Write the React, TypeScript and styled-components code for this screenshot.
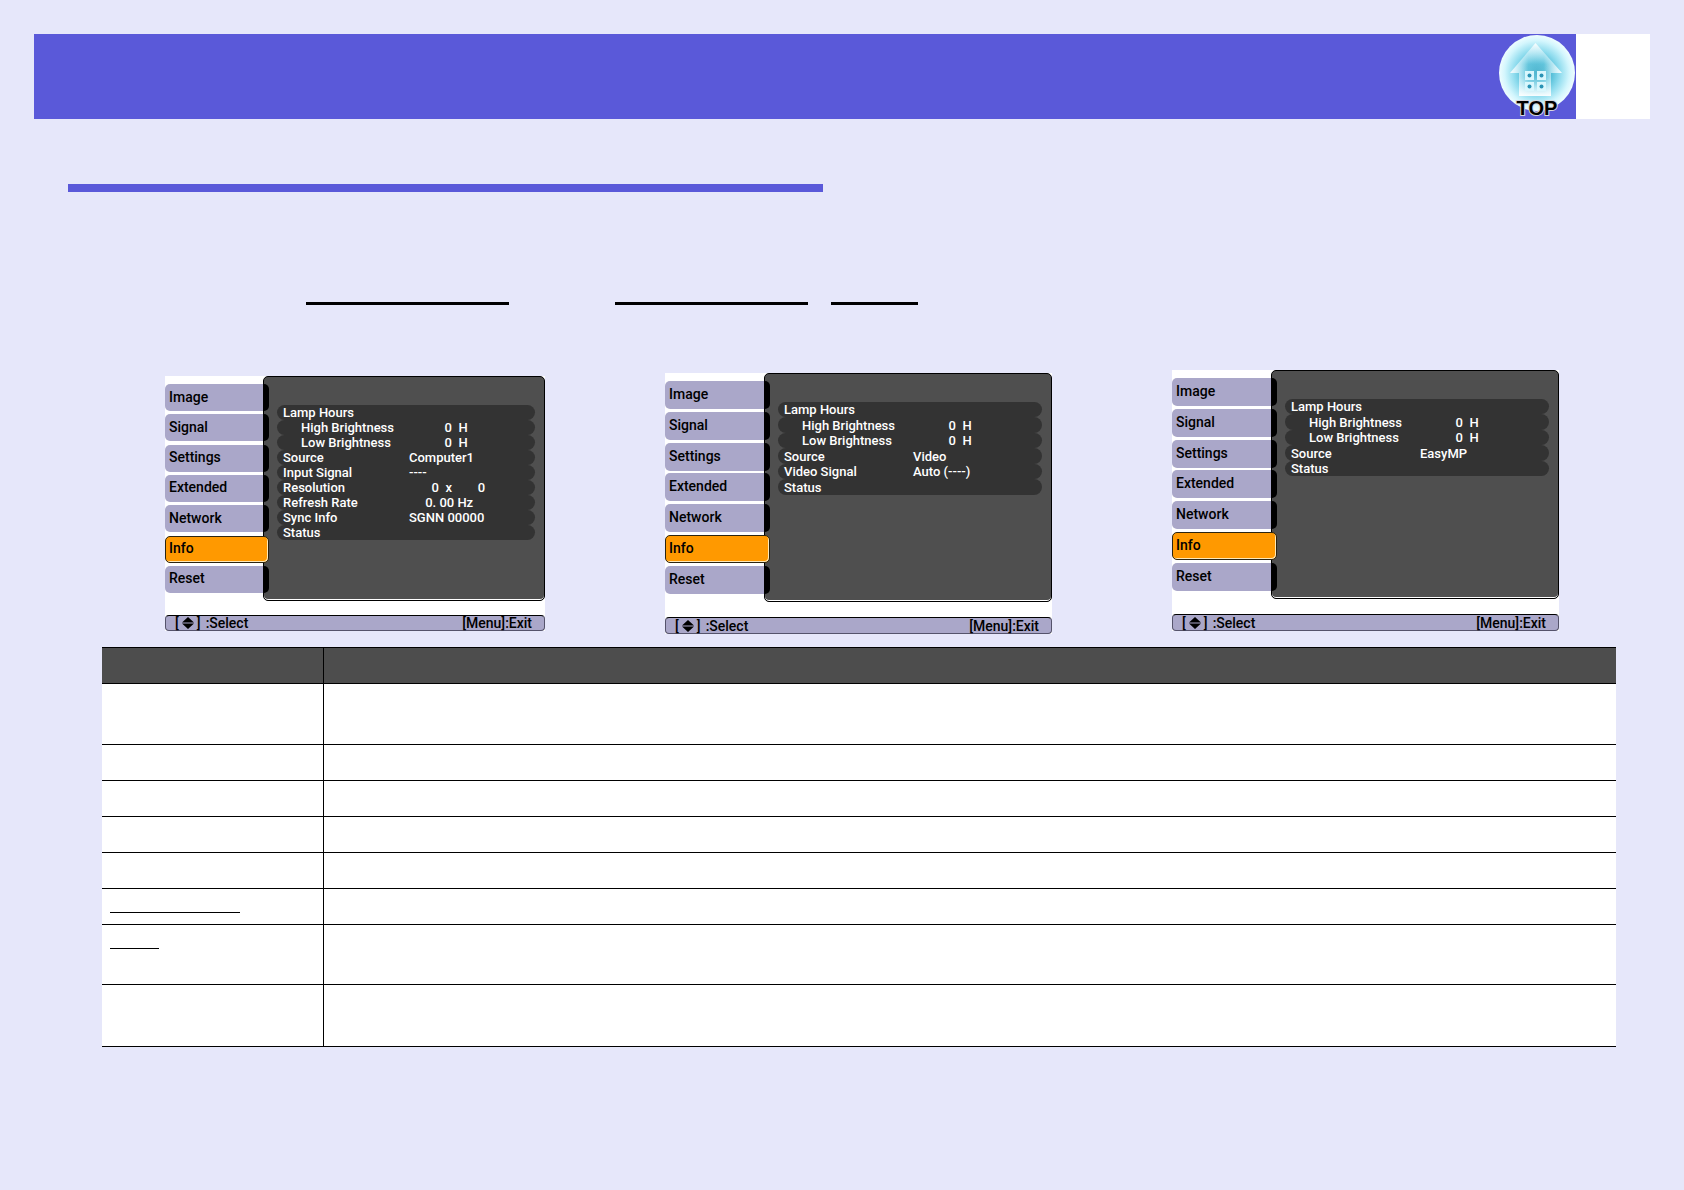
import React from "react";
import styled, { createGlobalStyle, css } from "styled-components";

type ScreenSize = "small" | "large";

interface InfoItem {
  label: string;
  value?: string;
  indent?: boolean;
}

interface ProjectorMenuProps {
  size: ScreenSize;
  drop: number;
  items: InfoItem[];
}

const TABS = [
  "Image",
  "Signal",
  "Settings",
  "Extended",
  "Network",
  "Info",
  "Reset",
];

const LAMP_ITEMS: InfoItem[] = [
  { label: "Lamp Hours" },
  { label: "High Brightness", value: "           0  H", indent: true },
  { label: "Low Brightness", value: "           0  H", indent: true },
];

const COMPUTER_ITEMS: InfoItem[] = [
  ...LAMP_ITEMS,
  { label: "Source", value: "Computer1" },
  { label: "Input Signal", value: "----" },
  { label: "Resolution", value: "       0  x        0" },
  { label: "Refresh Rate", value: "     0. 00 Hz" },
  { label: "Sync Info", value: "SGNN 00000" },
  { label: "Status" },
];

const VIDEO_ITEMS: InfoItem[] = [
  ...LAMP_ITEMS,
  { label: "Source", value: "Video" },
  { label: "Video Signal", value: "Auto (----)" },
  { label: "Status" },
];

const EASYMP_ITEMS: InfoItem[] = [
  ...LAMP_ITEMS,
  { label: "Source", value: "EasyMP" },
  { label: "Status" },
];

// height of each row, and the width of the underline in its first cell
const TABLE_ROWS = [
  { height: 61 },
  { height: 36 },
  { height: 36 },
  { height: 36 },
  { height: 36 },
  { height: 36, underline: 130 },
  { height: 60, underline: 49 },
  { height: 62 },
];

const TopIcon = () => (
  <svg width="78" height="85" viewBox="0 0 78 85">
    <defs>
      <radialGradient id="ball" cx="0.5" cy="0.5" r="0.5">
        <stop offset="0" stopColor="#1797b8" />
        <stop offset="0.3" stopColor="#3fb4d0" />
        <stop offset="0.6" stopColor="#8fdcee" />
        <stop offset="0.85" stopColor="#d3f6fd" />
        <stop offset="1" stopColor="#effdff" />
      </radialGradient>
      <linearGradient id="house" x1="0" y1="0" x2="0" y2="1">
        <stop offset="0" stopColor="#ffffff" stopOpacity="0.95" />
        <stop offset="0.4" stopColor="#a5e4f3" stopOpacity="0.35" />
        <stop offset="0.65" stopColor="#b5ecf8" stopOpacity="0.4" />
        <stop offset="1" stopColor="#ffffff" stopOpacity="0.95" />
      </linearGradient>
      <linearGradient id="eaves" x1="0" y1="0" x2="1" y2="0">
        <stop offset="0" stopColor="#ffffff" stopOpacity="0.9" />
        <stop offset="0.35" stopColor="#ffffff" stopOpacity="0" />
        <stop offset="0.65" stopColor="#ffffff" stopOpacity="0" />
        <stop offset="1" stopColor="#ffffff" stopOpacity="0.9" />
      </linearGradient>
    </defs>
    <circle cx="39" cy="39" r="38" fill="url(#ball)" />
    <path d="M37.5 9 L64 39 H53 V62 H21 V39 H12 Z" fill="url(#house)" />
    <path d="M37.5 9 L64 39 H53 V62 H21 V39 H12 Z" fill="url(#eaves)" />
    {[27, 39].map((x) =>
      [37, 48].map((y) => (
        <g key={`${x}-${y}`}>
          <rect x={x} y={y} width="9" height="9" fill="#d9f7fd" />
          <circle cx={x + 4.5} cy={y + 4.5} r="2" fill="#2a93b5" />
        </g>
      )),
    )}
    <text
      x="39"
      y="81"
      textAnchor="middle"
      fontFamily="Liberation Sans, Arial, sans-serif"
      fontSize="20"
      fontWeight="700"
      fill="#000000"
      stroke="#d5d5dd"
      strokeWidth="2"
      paintOrder="stroke"
    >
      TOP
    </text>
  </svg>
);

const ProjectorMenu = ({ size, drop, items }: ProjectorMenuProps) => {
  return (
    <MenuScreen $size={size} $drop={drop}>
      <MenuBody $size={size}>
        <TabList $size={size}>
          {TABS.map((tab) => (
            <TabButton
              key={tab}
              type="button"
              $size={size}
              $active={tab === "Info"}
            >
              {tab}
            </TabButton>
          ))}
        </TabList>
        <InfoPanel>
          <InfoList>
            {items.map((item) => (
              <InfoRow key={item.label} $size={size}>
                <InfoLabel $indent={!!item.indent}>{item.label}</InfoLabel>
                <InfoValue>{item.value}</InfoValue>
              </InfoRow>
            ))}
          </InfoList>
        </InfoPanel>
      </MenuBody>
      <GuideBar $size={size}>
        <GuideText>
          [
          <svg width="12" height="12" viewBox="0 0 12 12">
            <path d="M6 0 L12 5.5 H0 Z M0 6.5 H12 L6 12 Z" fill="#000000" />
          </svg>
          ]<GuideAction>:Select</GuideAction>
        </GuideText>
        <GuideText>[Menu]:Exit</GuideText>
      </GuideBar>
    </MenuScreen>
  );
};

const App = () => {
  return (
    <>
      <GlobalStyle />
      <Header>
        <TitleBar>
          <TopLink href="#">
            <TopIcon />
          </TopLink>
        </TitleBar>
        <PageNumber />
      </Header>
      <Main>
        <SectionRule />
        <TermLine>
          <TermRule $width={203} $gap={0} />
          <TermRule $width={193} $gap={106} />
          <TermRule $width={87} $gap={23} />
        </TermLine>
        <Content>
          <ScreenRow>
            <ProjectorMenu size="small" drop={6} items={COMPUTER_ITEMS} />
            <ProjectorMenu size="large" drop={3} items={VIDEO_ITEMS} />
            <ProjectorMenu size="large" drop={0} items={EASYMP_ITEMS} />
          </ScreenRow>
          <InfoTable>
            <thead>
              <tr>
                <HeadCell $narrow />
                <HeadCell />
              </tr>
            </thead>
            <tbody>
              {TABLE_ROWS.map((row, index) => (
                <TableRow key={index} $height={row.height}>
                  <BodyCell>
                    {row.underline && <CellRule $width={row.underline} />}
                  </BodyCell>
                  <BodyCell />
                </TableRow>
              ))}
            </tbody>
          </InfoTable>
        </Content>
      </Main>
    </>
  );
};

export default App;

const GlobalStyle = createGlobalStyle`
  * {
    box-sizing: border-box;
  }

  body {
    margin: 0;
    background-color: #e6e7fa;
    font-family: Roboto, "Liberation Sans", Arial, sans-serif;
  }
`;

const Header = styled.header`
  margin: 34px 34px 0;

  display: flex;
  height: 85px;
`;

const TitleBar = styled.div`
  flex: 1;
  display: flex;
  justify-content: flex-end;

  background-color: #5a59d9;
`;

const TopLink = styled.a`
  display: block;
  height: 85px;
`;

const PageNumber = styled.div`
  width: 74px;
  background-color: #ffffff;
`;

const Main = styled.main`
  padding: 65px 68px 0;
`;

const SectionRule = styled.div`
  width: 49%;
  max-width: 755px;
  height: 8px;
  background-color: #5a59d9;
`;

const TermLine = styled.div`
  margin-top: 110px;
  padding-left: 238px;

  display: flex;
`;

const TermRule = styled.div<{ $width: number; $gap: number }>`
  margin-left: ${(props) => props.$gap}px;
  width: ${(props) => props.$width}px;
  height: 3px;
  background-color: #000000;
`;

const Content = styled.section`
  padding: 65px 0 0 34px;
`;

const ScreenRow = styled.div`
  padding: 0 57px 0 63px;

  display: grid;
  grid-template-columns: 380fr 387fr 387fr;
  column-gap: 120px;
  align-items: start;
`;

const MenuScreen = styled.div<{ $size: ScreenSize; $drop: number }>`
  margin-top: ${(props) => props.$drop}px;

  display: flex;
  flex-direction: column;
  justify-content: space-between;
  height: ${(props) => (props.$size === "small" ? 255 : 261)}px;

  background-color: #ffffff;
  font-size: 13px;
  font-weight: 500;
`;

const MenuBody = styled.div<{ $size: ScreenSize }>`
  display: flex;
  height: ${(props) => (props.$size === "small" ? 225 : 229)}px;
`;

const TabList = styled.nav<{ $size: ScreenSize }>`
  /* the tabs lap over the left edge of the panel */
  z-index: 1;
  margin: 8px -6px 8px 0;

  display: flex;
  flex-direction: column;
  justify-content: space-between;
  flex: none;
  width: ${(props) => (props.$size === "small" ? 104 : 105)}px;
`;

const TabButton = styled.button<{ $size: ScreenSize; $active: boolean }>`
  padding: 0 4px 2px;
  height: ${(props) => (props.$size === "small" ? 27 : 28)}px;

  border: none;
  border-radius: 5px;
  background: linear-gradient(
    to right,
    #aaa7c9 calc(100% - 6px),
    #000000 calc(100% - 6px)
  );
  color: #000000;
  font: inherit;
  font-size: 14px;
  text-align: left;

  ${(props) =>
    props.$active &&
    css`
      padding: 0 3px 2px;
      border: 1px solid #2b2410;
      background: #ff9900;
      box-shadow: inset -1px -1px 0 #ffe9b8;
    `}
`;

const InfoPanel = styled.div`
  padding: 28px 9px 0 13px;
  flex: 1;

  border: 1px solid #000000;
  border-radius: 5px;
  background-color: #4f4f4f;
  box-shadow: inset 0 -1px 0 #ffffff;
`;

const InfoList = styled.dl`
  margin: 0;
`;

const InfoRow = styled.div<{ $size: ScreenSize }>`
  padding-left: 6px;

  display: grid;
  grid-template-columns: 1fr 1fr;
  align-items: center;
  height: 15px;

  border-radius: 8px;
  background-color: #333333;
  color: #ffffff;
  line-height: 15px;

  ${(props) =>
    props.$size === "large" &&
    css`
      &:nth-child(even) {
        height: 16px;
      }
    `}
`;

const InfoLabel = styled.dt<{ $indent: boolean }>`
  padding-left: ${(props) => (props.$indent ? 18 : 0)}px;
  white-space: nowrap;
`;

const InfoValue = styled.dd`
  margin: 0;
  white-space: pre;
`;

const GuideBar = styled.div<{ $size: ScreenSize }>`
  padding: 0 12px 0 9px;

  display: flex;
  justify-content: space-between;
  align-items: center;
  height: ${(props) => (props.$size === "small" ? 16 : 17)}px;

  border: 1px solid #55536b;
  border-top-color: #000000;
  border-radius: 4px;
  background-color: #aaa7c9;
  color: #000000;
`;

const GuideText = styled.div`
  display: flex;
  align-items: center;
  gap: 3px;
  font-size: 14px;
  line-height: 14px;
`;

const GuideAction = styled.span`
  margin-left: 2px;
`;

const InfoTable = styled.table`
  margin-top: 13px;
  width: 100%;

  border-collapse: collapse;
  table-layout: fixed;
  background-color: #ffffff;
`;

const HeadCell = styled.th<{ $narrow?: boolean }>`
  padding: 0;
  width: ${(props) => (props.$narrow ? "221px" : "auto")};
  height: 36px;

  border-top: 1px solid #000000;
  border-bottom: 1px solid #000000;
  background-color: #4d4d4d;

  & + & {
    border-left: 1px solid #000000;
  }
`;

const TableRow = styled.tr<{ $height: number }>`
  height: ${(props) => props.$height}px;
`;

const BodyCell = styled.td`
  padding: 23px 8px 0;

  border-bottom: 1px solid #000000;
  vertical-align: top;

  & + & {
    border-left: 1px solid #000000;
  }
`;

const CellRule = styled.div<{ $width: number }>`
  width: ${(props) => props.$width}px;
  height: 1px;
  background-color: #000000;
`;
